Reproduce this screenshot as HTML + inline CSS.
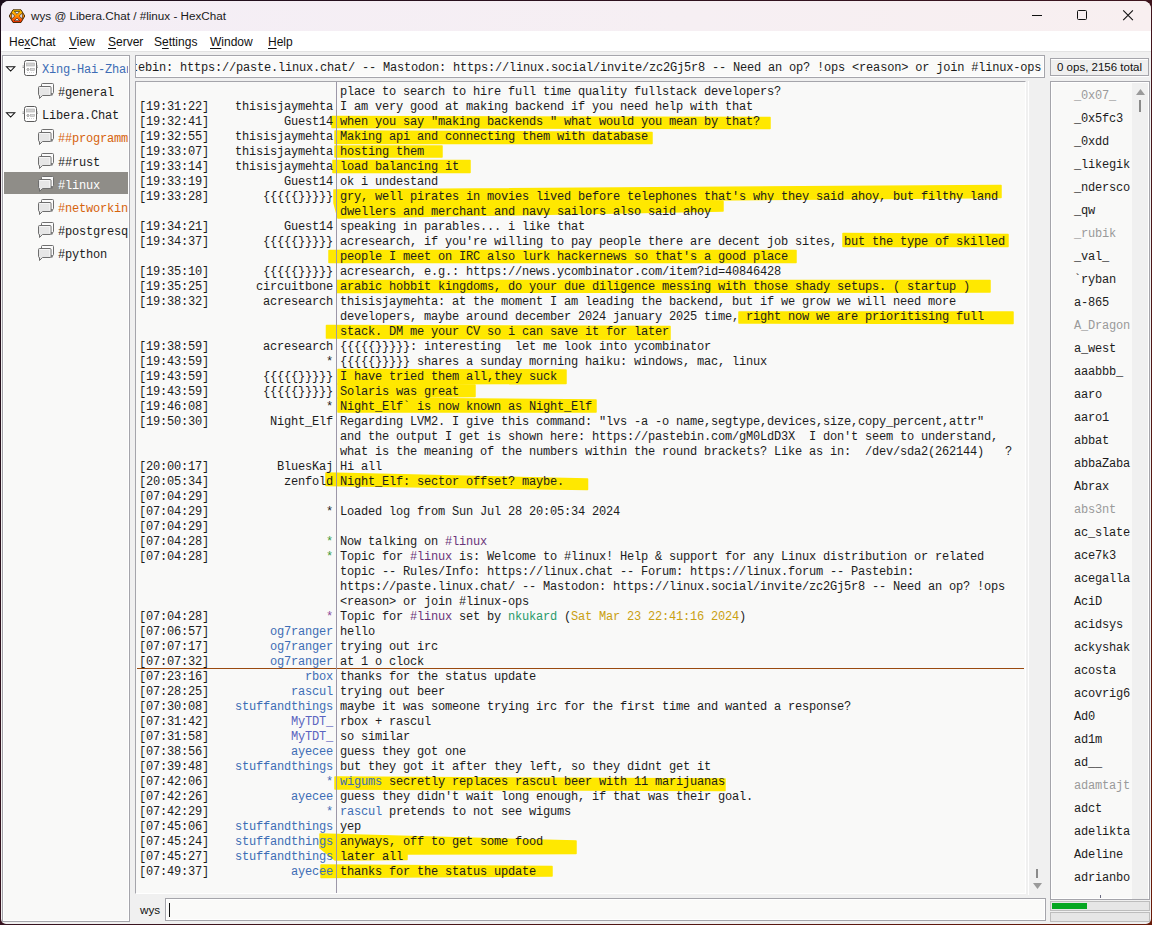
<!DOCTYPE html>
<html><head><meta charset="utf-8">
<style>
*{margin:0;padding:0;box-sizing:border-box}
html,body{width:1152px;height:925px;overflow:hidden}
body{background:linear-gradient(135deg,#1c0e1c 0%,#3a1420 50%,#6a1a08 100%);position:relative;font-family:"Liberation Sans",sans-serif}
#win{position:absolute;left:1px;top:1px;width:1150px;height:923px;border-radius:8px 8px 5px 5px;background:#f0f0f0;overflow:hidden}
.abs{position:absolute}
#title{left:0;top:0;width:1150px;height:30px;background:linear-gradient(90deg,#f4eef6 0%,#f6eff3 60%,#f8eff0 100%)}
#ttext{left:30px;top:8px;font-size:11.7px;color:#1a1a1a;white-space:nowrap}
#menu{left:0;top:30px;width:1150px;height:21px;background:#fff;border-bottom:1px solid #e3e3e3}
.mi{position:absolute;top:4px;font-size:12px;color:#111;white-space:nowrap}
.mi u{text-decoration:underline;text-underline-offset:2px}
.panel{position:absolute;border:1px solid #a5a5ab;box-shadow:inset 1px 1px 0 #fff,inset -1px -1px 0 #fff;background:#f9f9f8}
.mono{font-family:"Liberation Mono",monospace}
#chat{overflow:hidden}
.row{position:absolute;left:0;height:15px;line-height:15px;white-space:pre;font-family:"Liberation Mono",monospace;font-size:12px;letter-spacing:-0.2px;color:#1c1c1c}
.ts{position:absolute;left:3px;top:0}
.nk{position:absolute;right:-197px;top:0;text-align:right}
.msg{position:absolute;left:204px;top:0}
.p{color:#6a3478}.t{color:#2a9a6a}.y{color:#c9a012}.b{color:#3d6db5}
.hl{position:absolute;height:12px;background:#ffe800;border-radius:3px}
.ni{position:absolute;left:23px;font-family:"Liberation Mono",monospace;font-size:12px;letter-spacing:-0.2px;color:#1c1c1c;white-space:pre}
.ni.aw{color:#9a9a9a}
.tr{position:absolute;font-family:"Liberation Mono",monospace;font-size:12px;letter-spacing:-0.2px;color:#1c1c1c;white-space:pre}
</style></head><body>
<div id="win">
 <div id="title" class="abs">
  <svg class="abs" style="left:7px;top:6.5px" width="18" height="16" viewBox="0 0 18 16">
   <defs><linearGradient id="hg" x1="0" y1="0" x2="0" y2="1"><stop offset="0" stop-color="#ffd200"/><stop offset="0.5" stop-color="#ff8a00"/><stop offset="1" stop-color="#f22800"/></linearGradient></defs>
   <polygon points="5,1.8 13,1.8 16.8,8 13,14.5 5,14.5 1.2,8" fill="url(#hg)" stroke="#3a2000" stroke-width="0.9" stroke-linejoin="round"/>
   <g fill="#e4e6ee" stroke="#2a1a00" stroke-width="0.6">
   <polygon points="6.3,3.5 11.7,3.5 9,6.2"/>
   <polygon points="6.3,12.7 11.7,12.7 9,10"/>
   <polygon points="3.6,5 6.8,8 3.6,11"/>
   <polygon points="14.4,5 11.2,8 14.4,11"/>
   </g>
  </svg>
  <div id="ttext" class="abs">wys @ Libera.Chat / #linux - HexChat</div>
  <div class="abs" style="left:1031px;top:14px;width:10px;height:1px;background:#111"></div>
  <div class="abs" style="left:1076px;top:9px;width:10px;height:10px;border:1px solid #111;border-radius:1.5px"></div>
  <svg class="abs" style="left:1121px;top:8px" width="13" height="13" viewBox="0 0 13 13"><path d="M1.2 1.4L10.9 11.1M10.9 1.4L1.2 11.1" stroke="#111" stroke-width="1.1"/></svg>
 </div>
 <div id="menu" class="abs">
  <span class="mi" style="left:8px">He<u>x</u>Chat</span>
  <span class="mi" style="left:68px"><u>V</u>iew</span>
  <span class="mi" style="left:107px"><u>S</u>erver</span>
  <span class="mi" style="left:153px">S<u>e</u>ttings</span>
  <span class="mi" style="left:209px"><u>W</u>indow</span>
  <span class="mi" style="left:267px"><u>H</u>elp</span>
 </div>

 <!-- tree -->
 <div class="panel" style="left:1px;top:54px;width:128px;height:867px;overflow:hidden">
  <div class="abs" style="left:1px;top:116px;width:124px;height:22px;background:#8f8d88"></div>
  <div class="abs" style="left:0;top:0;width:125px;height:860px;overflow:hidden"><svg class="abs" style="left:2px;top:10px" width="11" height="7" viewBox="0 0 11 7"><path d="M1.5 0.8H9.8L5.65 5.1Z" fill="#fff" stroke="#111" stroke-width="1.05" stroke-linejoin="miter"/></svg>
<svg class="abs" style="left:18px;top:4px" width="17" height="17" viewBox="0 0 17 17"><rect x="3.5" y="0.5" width="12" height="15" rx="2" fill="#fff" stroke="#5a5a5a"/><path d="M1.5 6H3.5M1.5 7.5H3.5M15.5 6H17M15.5 7.5H17" stroke="#888" stroke-width="0.8"/><rect x="5.5" y="3" width="8" height="3" fill="#d0d0d0" stroke="#b0b0b0" stroke-width="0.6"/><circle cx="7" cy="9.5" r="1" fill="none" stroke="#777" stroke-width="0.8"/><rect x="9.5" y="8.5" width="4" height="2" fill="#d8d8d8" stroke="#aaa" stroke-width="0.6"/><path d="M6.5 13V12.5M8.5 13V12.5M10.5 13V12.5M12.5 13V12.5" stroke="#999" stroke-width="0.8"/></svg>
<div class="tr" style="left:39px;top:7px;color:#3d6db5;line-height:15px">Xing-Hai-Zhan</div>
<svg class="abs" style="left:35px;top:27px" width="18" height="17" viewBox="0 0 18 17"><path d="M3.5 3V1.5Q3.5 0.5 4.5 0.5H14.5Q15.5 0.5 15.5 1.5V9.5Q15.5 10.5 14.5 10.5L13.8 12.5V10.5H13" fill="#fbfbfb" stroke="#6e6e6e"/><path d="M1.5 3.5H12Q13 3.5 13 4.5V11.5Q13 12.5 12 12.5H4.5L1.5 15.5V12.5Q0.5 12.5 0.5 11.5V4.5Q0.5 3.5 1.5 3.5Z" fill="#e6e6e6" stroke="#6e6e6e"/><path d="M1.7 4.5H11.8V11.5" fill="none" stroke="#fafafa" stroke-width="0.8"/></svg>
<div class="tr" style="left:55px;top:30px;color:#1c1c1c;line-height:15px">#general</div>
<svg class="abs" style="left:2px;top:56px" width="11" height="7" viewBox="0 0 11 7"><path d="M1.5 0.8H9.8L5.65 5.1Z" fill="#fff" stroke="#111" stroke-width="1.05" stroke-linejoin="miter"/></svg>
<svg class="abs" style="left:18px;top:50px" width="17" height="17" viewBox="0 0 17 17"><rect x="3.5" y="0.5" width="12" height="15" rx="2" fill="#fff" stroke="#5a5a5a"/><path d="M1.5 6H3.5M1.5 7.5H3.5M15.5 6H17M15.5 7.5H17" stroke="#888" stroke-width="0.8"/><rect x="5.5" y="3" width="8" height="3" fill="#d0d0d0" stroke="#b0b0b0" stroke-width="0.6"/><circle cx="7" cy="9.5" r="1" fill="none" stroke="#777" stroke-width="0.8"/><rect x="9.5" y="8.5" width="4" height="2" fill="#d8d8d8" stroke="#aaa" stroke-width="0.6"/><path d="M6.5 13V12.5M8.5 13V12.5M10.5 13V12.5M12.5 13V12.5" stroke="#999" stroke-width="0.8"/></svg>
<div class="tr" style="left:39px;top:53px;color:#1c1c1c;line-height:15px">Libera.Chat</div>
<svg class="abs" style="left:35px;top:73px" width="18" height="17" viewBox="0 0 18 17"><path d="M3.5 3V1.5Q3.5 0.5 4.5 0.5H14.5Q15.5 0.5 15.5 1.5V9.5Q15.5 10.5 14.5 10.5L13.8 12.5V10.5H13" fill="#fbfbfb" stroke="#6e6e6e"/><path d="M1.5 3.5H12Q13 3.5 13 4.5V11.5Q13 12.5 12 12.5H4.5L1.5 15.5V12.5Q0.5 12.5 0.5 11.5V4.5Q0.5 3.5 1.5 3.5Z" fill="#e6e6e6" stroke="#6e6e6e"/><path d="M1.7 4.5H11.8V11.5" fill="none" stroke="#fafafa" stroke-width="0.8"/></svg>
<div class="tr" style="left:55px;top:76px;color:#d6630c;line-height:15px">##programming</div>
<svg class="abs" style="left:35px;top:97px" width="18" height="17" viewBox="0 0 18 17"><path d="M3.5 3V1.5Q3.5 0.5 4.5 0.5H14.5Q15.5 0.5 15.5 1.5V9.5Q15.5 10.5 14.5 10.5L13.8 12.5V10.5H13" fill="#fbfbfb" stroke="#6e6e6e"/><path d="M1.5 3.5H12Q13 3.5 13 4.5V11.5Q13 12.5 12 12.5H4.5L1.5 15.5V12.5Q0.5 12.5 0.5 11.5V4.5Q0.5 3.5 1.5 3.5Z" fill="#e6e6e6" stroke="#6e6e6e"/><path d="M1.7 4.5H11.8V11.5" fill="none" stroke="#fafafa" stroke-width="0.8"/></svg>
<div class="tr" style="left:55px;top:100px;color:#1c1c1c;line-height:15px">##rust</div>
<svg class="abs" style="left:35px;top:120px" width="18" height="17" viewBox="0 0 18 17"><path d="M3.5 3V1.5Q3.5 0.5 4.5 0.5H14.5Q15.5 0.5 15.5 1.5V9.5Q15.5 10.5 14.5 10.5L13.8 12.5V10.5H13" fill="#fbfbfb" stroke="#6e6e6e"/><path d="M1.5 3.5H12Q13 3.5 13 4.5V11.5Q13 12.5 12 12.5H4.5L1.5 15.5V12.5Q0.5 12.5 0.5 11.5V4.5Q0.5 3.5 1.5 3.5Z" fill="#e6e6e6" stroke="#6e6e6e"/><path d="M1.7 4.5H11.8V11.5" fill="none" stroke="#fafafa" stroke-width="0.8"/></svg>
<div class="tr" style="left:55px;top:123px;color:#ffffff;line-height:15px">#linux</div>
<svg class="abs" style="left:35px;top:143px" width="18" height="17" viewBox="0 0 18 17"><path d="M3.5 3V1.5Q3.5 0.5 4.5 0.5H14.5Q15.5 0.5 15.5 1.5V9.5Q15.5 10.5 14.5 10.5L13.8 12.5V10.5H13" fill="#fbfbfb" stroke="#6e6e6e"/><path d="M1.5 3.5H12Q13 3.5 13 4.5V11.5Q13 12.5 12 12.5H4.5L1.5 15.5V12.5Q0.5 12.5 0.5 11.5V4.5Q0.5 3.5 1.5 3.5Z" fill="#e6e6e6" stroke="#6e6e6e"/><path d="M1.7 4.5H11.8V11.5" fill="none" stroke="#fafafa" stroke-width="0.8"/></svg>
<div class="tr" style="left:55px;top:146px;color:#d6630c;line-height:15px">#networking</div>
<svg class="abs" style="left:35px;top:166px" width="18" height="17" viewBox="0 0 18 17"><path d="M3.5 3V1.5Q3.5 0.5 4.5 0.5H14.5Q15.5 0.5 15.5 1.5V9.5Q15.5 10.5 14.5 10.5L13.8 12.5V10.5H13" fill="#fbfbfb" stroke="#6e6e6e"/><path d="M1.5 3.5H12Q13 3.5 13 4.5V11.5Q13 12.5 12 12.5H4.5L1.5 15.5V12.5Q0.5 12.5 0.5 11.5V4.5Q0.5 3.5 1.5 3.5Z" fill="#e6e6e6" stroke="#6e6e6e"/><path d="M1.7 4.5H11.8V11.5" fill="none" stroke="#fafafa" stroke-width="0.8"/></svg>
<div class="tr" style="left:55px;top:169px;color:#1c1c1c;line-height:15px">#postgresql</div>
<svg class="abs" style="left:35px;top:189px" width="18" height="17" viewBox="0 0 18 17"><path d="M3.5 3V1.5Q3.5 0.5 4.5 0.5H14.5Q15.5 0.5 15.5 1.5V9.5Q15.5 10.5 14.5 10.5L13.8 12.5V10.5H13" fill="#fbfbfb" stroke="#6e6e6e"/><path d="M1.5 3.5H12Q13 3.5 13 4.5V11.5Q13 12.5 12 12.5H4.5L1.5 15.5V12.5Q0.5 12.5 0.5 11.5V4.5Q0.5 3.5 1.5 3.5Z" fill="#e6e6e6" stroke="#6e6e6e"/><path d="M1.7 4.5H11.8V11.5" fill="none" stroke="#fafafa" stroke-width="0.8"/></svg>
<div class="tr" style="left:55px;top:192px;color:#1c1c1c;line-height:15px">#python</div></div>
 </div>

 <!-- topic -->
 <div class="panel" style="left:134px;top:54px;width:910px;height:23px;background:#fafaf9;overflow:hidden">
  <div class="row" style="top:5px;left:-5px">tebin: https://paste.linux.chat/ -- Mastodon: https://linux.social/invite/zc2Gj5r8 -- Need an op? !ops &lt;reason&gt; or join #linux-ops</div>
 </div>
 <!-- ops -->
 <div class="abs" style="left:1049px;top:57px;width:99px;height:18px;border:1px solid #a5a5ab;box-shadow:inset 0 1px 0 #fff,0 1px 0 #fff;background:#efefef">
  <div class="abs" style="left:6px;top:2px;font-size:11.5px;color:#111;white-space:nowrap">0 ops, 2156 total</div>
 </div>

 <!-- chat -->
 <div id="chat" class="abs" style="left:134px;top:80px;width:891px;height:813px;border-top:1px solid #a5a5ab;border-left:1px solid #a5a5ab;border-right:1px solid #fff;border-bottom:1px solid #fff;background:#f9f9f8">
  
  <div class="abs" style="left:1px;top:586px;width:887px;height:1px;background:#9a4a10"></div>
<svg class="abs" style="left:0;top:0" width="889" height="812"><g fill="#ffe800" stroke="#ffe800" stroke-width="1.5" stroke-linejoin="round"><polygon points="196.0,34.5 634.0,35.5 634.0,46.5 196.0,45.5"/><polygon points="199.0,49.0 516.0,50.5 516.0,61.5 199.0,61.5"/><polygon points="199.0,64.0 306.0,64.0 306.0,75.0 199.0,75.0"/><polygon points="197.0,78.5 334.0,78.5 334.0,90.5 197.0,90.5"/><polygon points="198.0,108.0 865.0,103.5 865.0,115.5 464.0,119.0 587.0,119.5 587.0,129.0 202.0,136.0 198.0,121.0"/><polygon points="707.0,151.5 872.0,152.5 872.0,164.5 707.0,164.5"/><polygon points="193.0,168.5 660.0,168.5 660.0,180.5 193.0,180.5"/><polygon points="201.0,198.5 854.0,198.5 854.0,210.0 201.0,210.5"/><polygon points="603.0,230.0 877.0,230.0 877.0,241.5 603.0,241.0"/><polygon points="190.5,243.5 534.0,244.5 534.0,257.5 190.5,256.0"/><polygon points="202.0,287.5 430.0,288.0 430.0,301.5 202.0,302.0"/><polygon points="202.0,302.0 339.0,303.0 339.0,314.5 202.0,316.0"/><polygon points="202.0,316.0 460.0,318.0 460.0,330.0 202.0,330.0"/><polygon points="190.0,391.0 451.5,397.0 451.5,407.5 190.0,403.5"/><polygon points="199.0,695.0 589.0,697.0 589.0,708.5 199.0,707.0"/><polygon points="184.0,752.0 440.0,759.0 440.0,771.5 271.0,772.0 271.0,777.5 199.0,778.0 184.0,766.0"/><polygon points="185.0,783.0 416.0,784.5 416.0,794.0 185.0,795.5"/></g></svg>
<div class="row" style="top:3px"><span class="msg">place to search to hire full time quality fullstack developers?</span></div>
<div class="row" style="top:18px"><span class="ts">[19:31:22]</span><span class="nk" style="color:#1c1c1c">thisisjaymehta</span><span class="msg">I am very good at making backend if you need help with that</span></div>
<div class="row" style="top:33px"><span class="ts">[19:32:41]</span><span class="nk" style="color:#1c1c1c">Guest14</span><span class="msg">when you say "making backends " what would you mean by that?</span></div>
<div class="row" style="top:48px"><span class="ts">[19:32:55]</span><span class="nk" style="color:#1c1c1c">thisisjaymehta</span><span class="msg">Making api and connecting them with database</span></div>
<div class="row" style="top:63px"><span class="ts">[19:33:07]</span><span class="nk" style="color:#1c1c1c">thisisjaymehta</span><span class="msg">hosting them</span></div>
<div class="row" style="top:78px"><span class="ts">[19:33:14]</span><span class="nk" style="color:#1c1c1c">thisisjaymehta</span><span class="msg">load balancing it</span></div>
<div class="row" style="top:93px"><span class="ts">[19:33:19]</span><span class="nk" style="color:#1c1c1c">Guest14</span><span class="msg">ok i undestand</span></div>
<div class="row" style="top:108px"><span class="ts">[19:33:28]</span><span class="nk" style="color:#1c1c1c">{{{{{}}}}}</span><span class="msg">gry, well pirates in movies lived before telephones that's why they said ahoy, but filthy land</span></div>
<div class="row" style="top:123px"><span class="msg">dwellers and merchant and navy sailors also said ahoy</span></div>
<div class="row" style="top:138px"><span class="ts">[19:34:21]</span><span class="nk" style="color:#1c1c1c">Guest14</span><span class="msg">speaking in parables... i like that</span></div>
<div class="row" style="top:153px"><span class="ts">[19:34:37]</span><span class="nk" style="color:#1c1c1c">{{{{{}}}}}</span><span class="msg">acresearch, if you're willing to pay people there are decent job sites, but the type of skilled</span></div>
<div class="row" style="top:168px"><span class="msg">people I meet on IRC also lurk hackernews so that's a good place</span></div>
<div class="row" style="top:183px"><span class="ts">[19:35:10]</span><span class="nk" style="color:#1c1c1c">{{{{{}}}}}</span><span class="msg">acresearch, e.g.: https://news.ycombinator.com/item?id=40846428</span></div>
<div class="row" style="top:198px"><span class="ts">[19:35:25]</span><span class="nk" style="color:#1c1c1c">circuitbone</span><span class="msg">arabic hobbit kingdoms, do your due diligence messing with those shady setups. ( startup )</span></div>
<div class="row" style="top:213px"><span class="ts">[19:38:32]</span><span class="nk" style="color:#1c1c1c">acresearch</span><span class="msg">thisisjaymehta: at the moment I am leading the backend, but if we grow we will need more</span></div>
<div class="row" style="top:228px"><span class="msg">developers, maybe around december 2024 january 2025 time, right now we are prioritising full</span></div>
<div class="row" style="top:243px"><span class="msg">stack. DM me your CV so i can save it for later</span></div>
<div class="row" style="top:258px"><span class="ts">[19:38:59]</span><span class="nk" style="color:#1c1c1c">acresearch</span><span class="msg">{{{{{}}}}}: interesting  let me look into ycombinator</span></div>
<div class="row" style="top:273px"><span class="ts">[19:43:59]</span><span class="nk" style="color:#1c1c1c">*</span><span class="msg">{{{{{}}}}} shares a sunday morning haiku: windows, mac, linux</span></div>
<div class="row" style="top:288px"><span class="ts">[19:43:59]</span><span class="nk" style="color:#1c1c1c">{{{{{}}}}}</span><span class="msg">I have tried them all,they suck</span></div>
<div class="row" style="top:303px"><span class="ts">[19:43:59]</span><span class="nk" style="color:#1c1c1c">{{{{{}}}}}</span><span class="msg">Solaris was great</span></div>
<div class="row" style="top:318px"><span class="ts">[19:46:08]</span><span class="nk" style="color:#1c1c1c">*</span><span class="msg">Night_Elf` is now known as Night_Elf</span></div>
<div class="row" style="top:333px"><span class="ts">[19:50:30]</span><span class="nk" style="color:#1c1c1c">Night_Elf</span><span class="msg">Regarding LVM2. I give this command: "lvs -a -o name,segtype,devices,size,copy_percent,attr"</span></div>
<div class="row" style="top:348px"><span class="msg">and the output I get is shown here: https://pastebin.com/gM0LdD3X  I don't seem to understand,</span></div>
<div class="row" style="top:363px"><span class="msg">what is the meaning of the numbers within the round brackets? Like as in:  /dev/sda2(262144)   ?</span></div>
<div class="row" style="top:378px"><span class="ts">[20:00:17]</span><span class="nk" style="color:#1c1c1c">BluesKaj</span><span class="msg">Hi all</span></div>
<div class="row" style="top:393px"><span class="ts">[20:05:34]</span><span class="nk" style="color:#1c1c1c">zenfold</span><span class="msg">Night_Elf: sector offset? maybe.</span></div>
<div class="row" style="top:408px"><span class="ts">[07:04:29]</span><span class="msg"></span></div>
<div class="row" style="top:423px"><span class="ts">[07:04:29]</span><span class="nk" style="color:#1c1c1c">*</span><span class="msg">Loaded log from Sun Jul 28 20:05:34 2024</span></div>
<div class="row" style="top:438px"><span class="ts">[07:04:29]</span><span class="msg"></span></div>
<div class="row" style="top:453px"><span class="ts">[07:04:28]</span><span class="nk" style="color:#3a9a3a">*</span><span class="msg">Now talking on <span class="p">#linux</span></span></div>
<div class="row" style="top:468px"><span class="ts">[07:04:28]</span><span class="nk" style="color:#3a9a3a">*</span><span class="msg">Topic for <span class="p">#linux</span> is: Welcome to #linux! Help &amp; support for any Linux distribution or related</span></div>
<div class="row" style="top:483px"><span class="msg">topic -- Rules/Info: https://linux.chat -- Forum: https://linux.forum -- Pastebin:</span></div>
<div class="row" style="top:498px"><span class="msg">https://paste.linux.chat/ -- Mastodon: https://linux.social/invite/zc2Gj5r8 -- Need an op? !ops</span></div>
<div class="row" style="top:513px"><span class="msg">&lt;reason&gt; or join #linux-ops</span></div>
<div class="row" style="top:528px"><span class="ts">[07:04:28]</span><span class="nk" style="color:#8a4a9a">*</span><span class="msg">Topic for <span class="p">#linux</span> set by <span class="t">nkukard</span> (<span class="y">Sat Mar 23 22:41:16 2024</span>)</span></div>
<div class="row" style="top:543px"><span class="ts">[07:06:57]</span><span class="nk" style="color:#3d6db5">og7ranger</span><span class="msg">hello</span></div>
<div class="row" style="top:558px"><span class="ts">[07:07:17]</span><span class="nk" style="color:#3d6db5">og7ranger</span><span class="msg">trying out irc</span></div>
<div class="row" style="top:573px"><span class="ts">[07:07:32]</span><span class="nk" style="color:#3d6db5">og7ranger</span><span class="msg">at 1 o clock</span></div>
<div class="row" style="top:588px"><span class="ts">[07:23:16]</span><span class="nk" style="color:#3d6db5">rbox</span><span class="msg">thanks for the status update</span></div>
<div class="row" style="top:603px"><span class="ts">[07:28:25]</span><span class="nk" style="color:#3d6db5">rascul</span><span class="msg">trying out beer</span></div>
<div class="row" style="top:618px"><span class="ts">[07:30:08]</span><span class="nk" style="color:#3d6db5">stuffandthings</span><span class="msg">maybe it was someone trying irc for the first time and wanted a response?</span></div>
<div class="row" style="top:633px"><span class="ts">[07:31:42]</span><span class="nk" style="color:#5a64c0">MyTDT_</span><span class="msg">rbox + rascul</span></div>
<div class="row" style="top:648px"><span class="ts">[07:31:58]</span><span class="nk" style="color:#5a64c0">MyTDT_</span><span class="msg">so similar</span></div>
<div class="row" style="top:663px"><span class="ts">[07:38:56]</span><span class="nk" style="color:#3d6db5">ayecee</span><span class="msg">guess they got one</span></div>
<div class="row" style="top:678px"><span class="ts">[07:39:48]</span><span class="nk" style="color:#3d6db5">stuffandthings</span><span class="msg">but they got it after they left, so they didnt get it</span></div>
<div class="row" style="top:693px"><span class="ts">[07:42:06]</span><span class="nk" style="color:#3d6db5">*</span><span class="msg"><span class="b">wigums</span> secretly replaces rascul beer with 11 marijuanas</span></div>
<div class="row" style="top:708px"><span class="ts">[07:42:26]</span><span class="nk" style="color:#3d6db5">ayecee</span><span class="msg">guess they didn't wait long enough, if that was their goal.</span></div>
<div class="row" style="top:723px"><span class="ts">[07:42:29]</span><span class="nk" style="color:#3d6db5">*</span><span class="msg"><span class="b">rascul</span> pretends to not see wigums</span></div>
<div class="row" style="top:738px"><span class="ts">[07:45:06]</span><span class="nk" style="color:#3d6db5">stuffandthings</span><span class="msg">yep</span></div>
<div class="row" style="top:753px"><span class="ts">[07:45:24]</span><span class="nk" style="color:#3d6db5">stuffandthings</span><span class="msg">anyways, off to get some food</span></div>
<div class="row" style="top:768px"><span class="ts">[07:45:27]</span><span class="nk" style="color:#3d6db5">stuffandthings</span><span class="msg">later all</span></div>
<div class="row" style="top:783px"><span class="ts">[07:49:37]</span><span class="nk" style="color:#3d6db5">ayecee</span><span class="msg">thanks for the status update</span></div>
  <div class="abs" style="left:200px;top:0;width:1px;height:812px;background:#9c97a8"></div>
 </div>
 <div class="abs" style="left:1027px;top:80px;width:1px;height:814px;background:#fff"></div>
 <!-- chat scrollbar bottom -->
 <div class="abs" style="left:1035px;top:868px;width:2px;height:9px;background:#8a8a8a"></div>
 <svg class="abs" style="left:1032px;top:882px" width="9" height="7" viewBox="0 0 9 7"><polygon points="0,0 9,0 4.5,6" fill="#9a9a9a"/></svg>

 <!-- nicklist -->
 <div class="panel" style="left:1049px;top:80px;width:100px;height:819px;overflow:hidden">
<div class="ni aw" style="top:7px">_0x07_</div>
<div class="ni" style="top:30px">_0x5fc3</div>
<div class="ni" style="top:53px">_0xdd</div>
<div class="ni" style="top:76px">_likegik</div>
<div class="ni" style="top:99px">_ndersco</div>
<div class="ni" style="top:122px">_qw</div>
<div class="ni aw" style="top:145px">_rubik</div>
<div class="ni" style="top:168px">_val_</div>
<div class="ni" style="top:191px">`ryban</div>
<div class="ni" style="top:214px">a-865</div>
<div class="ni aw" style="top:237px">A_Dragon</div>
<div class="ni" style="top:260px">a_west</div>
<div class="ni" style="top:283px">aaabbb_</div>
<div class="ni" style="top:306px">aaro</div>
<div class="ni" style="top:329px">aaro1</div>
<div class="ni" style="top:352px">abbat</div>
<div class="ni" style="top:375px">abbaZaba</div>
<div class="ni" style="top:398px">Abrax</div>
<div class="ni aw" style="top:421px">abs3nt</div>
<div class="ni" style="top:444px">ac_slate</div>
<div class="ni" style="top:467px">ace7k3</div>
<div class="ni" style="top:490px">acegalla</div>
<div class="ni" style="top:513px">AciD</div>
<div class="ni" style="top:536px">acidsys</div>
<div class="ni" style="top:559px">ackyshak</div>
<div class="ni" style="top:582px">acosta</div>
<div class="ni" style="top:605px">acovrig6</div>
<div class="ni" style="top:628px">Ad0</div>
<div class="ni" style="top:651px">ad1m</div>
<div class="ni" style="top:674px">ad__</div>
<div class="ni aw" style="top:697px">adamtajt</div>
<div class="ni" style="top:720px">adct</div>
<div class="ni" style="top:743px">adelikta</div>
<div class="ni" style="top:766px">Adeline</div>
<div class="ni" style="top:789px">adrianbo</div>
  <div class="abs" style="left:49px;top:813px;width:1px;height:3px;background:#6a6a80"></div>
  <div class="abs" style="left:81px;top:1px;width:16px;height:816px;background:#f0f0f0"></div>
  <svg class="abs" style="left:85px;top:7px" width="9" height="7" viewBox="0 0 9 7"><polygon points="4.5,0 9,6 0,6" fill="#9a9a9a"/></svg>
  <div class="abs" style="left:88px;top:18px;width:2px;height:12px;background:#8a8a8a"></div>
 </div>
 <div class="abs" style="left:1049px;top:900px;width:100px;height:10px;border:1px solid #bdbdbd;background:#e6e6e6">
  <div class="abs" style="left:1px;top:1px;width:35px;height:6px;background:#06a722"></div>
 </div>
 <div class="abs" style="left:1049px;top:911px;width:100px;height:10px;border:1px solid #bdbdbd;background:#e6e6e6"></div>

 <!-- input -->
 <div class="abs" style="left:139px;top:902px;font-size:11.7px;color:#111">wys</div>
 <div class="panel" style="left:164px;top:897px;width:881px;height:23px;background:#fafaf9">
  <div class="abs" style="left:3px;top:4px;width:1px;height:14px;background:#111"></div>
 </div>
</div>
</body></html>
